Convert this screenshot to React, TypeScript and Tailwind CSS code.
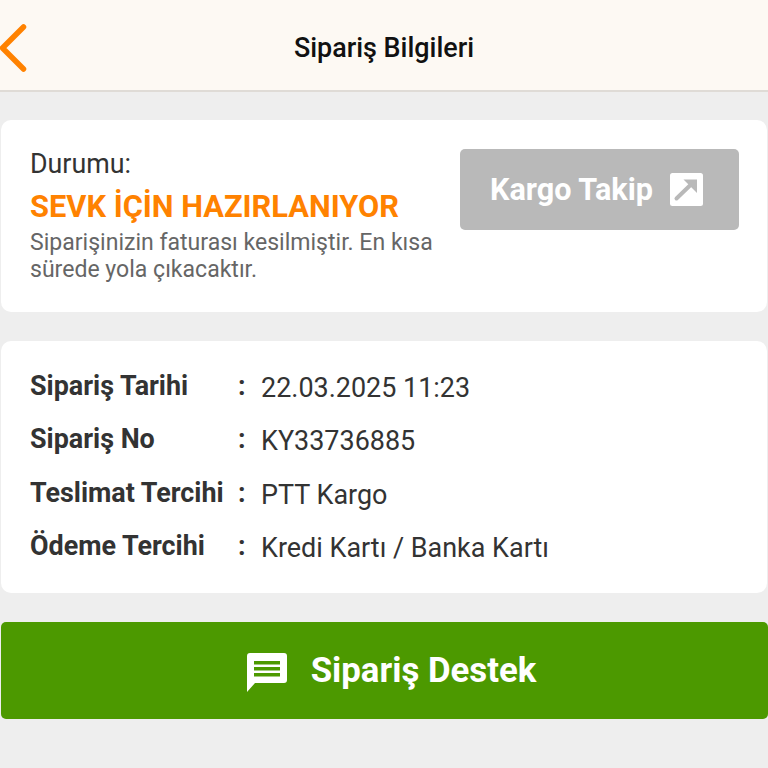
const rows = [
  { label: 'Sipariş Tarihi', value: '22.03.2025 11:23' },
  { label: 'Sipariş No', value: 'KY33736885' },
  { label: 'Teslimat Tercihi', value: 'PTT Kargo' },
  { label: 'Ödeme Tercihi', value: 'Kredi Kartı / Banka Kartı' },
];

export default function App() {
  return (
    <div className="h-[768px] overflow-hidden bg-[#eeeeee] font-['Roboto',sans-serif]">
      <header className="relative flex h-[92px] items-center justify-center border-b-2 border-[#dfdbd6] bg-[#fdf9f3] pt-[6px]">
        <svg className="absolute left-0 top-[24px] h-[48px] w-[28px]" viewBox="0 0 28 48" fill="none">
          <path d="M23.5 3 L2.5 24 L23.5 45" stroke="#ff8200" strokeWidth="5.5" strokeLinecap="round" strokeLinejoin="round" />
        </svg>
        <h1 className="text-[26.9px] font-medium leading-none text-[#111111]">Sipariş Bilgileri</h1>
      </header>

      <section className="mx-px mt-[28px] flex h-[192px] rounded-[10px] bg-white pl-[29px] pr-[28px]">
        <div className="flex w-[430px] flex-col pt-[29px]">
          <div className="text-[26.8px] leading-[30px] text-[#333333]">Durumu:</div>
          <div className="mt-[11px] text-[30.8px] font-bold leading-[34px] text-[#ff8200] whitespace-nowrap">SEVK İÇİN HAZIRLANIYOR</div>
          <p className="mt-[5px] text-[23.06px] leading-[27px] text-[#666666]">Siparişinizin faturası kesilmiştir. En kısa sürede yola çıkacaktır.</p>
        </div>
        <button className="mt-[29px] flex h-[81px] w-[279px] items-center justify-center gap-[17px] rounded-[5px] bg-[#b9b9b9] pr-[6px]">
          <span className="pt-[2px] text-[30.6px] font-bold leading-none text-white">Kargo Takip</span>
          <svg className="h-[33px] w-[33px]" viewBox="0 0 33 33">
            <rect width="33" height="33" rx="2.5" fill="#fff" />
            <path d="M6.5 25.5 L22 10.5" stroke="#b9b9b9" strokeWidth="4" strokeLinecap="round" />
            <path d="M13.5 6.5 H27 V20 Z" fill="#b9b9b9" />
          </svg>
        </button>
      </section>

      <section className="mx-px mt-[29px] flex h-[252px] flex-col rounded-[10px] bg-white pl-[29px] pt-[20px]">
        {rows.map((r) => (
          <div key={r.label} className="flex h-[53.3px] items-start">
            <div className="w-[208px] pt-[3px] text-[26.9px] font-bold leading-[44px] text-[#333333] whitespace-nowrap">{r.label}</div>
            <div className="w-[23px] pt-[3px] text-[26.9px] font-bold leading-[44px] text-[#333333]">:</div>
            <div className="pt-[5px] text-[26.95px] leading-[44px] text-[#333333] whitespace-nowrap">{r.value}</div>
          </div>
        ))}
      </section>

      <button className="mx-px mt-[29px] flex h-[97px] w-[767px] items-center justify-center gap-[24px] rounded-[5px] bg-[#4c9900] pl-[14px]">
        <svg className="h-[40px] w-[40px] translate-y-[2px]" viewBox="0 0 40 40">
          <path d="M3 0 H37 Q40 0 40 3 V27 Q40 30 37 30 H8 L0 39 V3 Q0 0 3 0 Z" fill="#fff" />
          <path d="M7 8 H33 V11.5 H7 Z M7 14 H33 V17.5 H7 Z M7 20 H33 V23.5 H7 Z" fill="#4c9900" />
        </svg>
        <span className="text-[34.8px] font-bold leading-none text-white">Sipariş Destek</span>
      </button>
    </div>
  );
}
